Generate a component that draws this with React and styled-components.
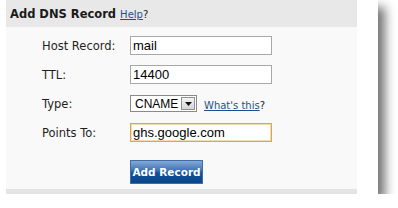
import { createGlobalStyle, styled } from 'styled-components';

const GlobalStyle = createGlobalStyle`
    html, body {
        margin: 0;
        padding: 0;
        background: #ffffff;
    }
    body {
        font-family: "DejaVu Sans", Verdana, sans-serif;
        color: #222;
    }
`;

const App = () => {
    return (
        <>
            <GlobalStyle />
            <Card>
                <Panel>
                    <PanelHeader>
                        <PanelTitle>Add DNS Record</PanelTitle>
                        <SmallLink href="#">Help</SmallLink>
                        <Mark>?</Mark>
                    </PanelHeader>
                    <PanelBody>
                        <Form>
                            <Label>Host Record:</Label>
                            <TextInput defaultValue="mail" />

                            <Label>TTL:</Label>
                            <TextInput defaultValue="14400" />

                            <Label>Type:</Label>
                            <Field>
                                <Select>
                                    <SelectValue>CNAME</SelectValue>
                                    <SelectButton>
                                        <svg width="7" height="4" viewBox="0 0 7 4">
                                            <path d="M0 0h7L3.5 4z" fill="#111" />
                                        </svg>
                                    </SelectButton>
                                </Select>
                                <span>
                                    <SmallLink href="#">What's this</SmallLink>
                                    <Mark>?</Mark>
                                </span>
                            </Field>

                            <Label>Points To:</Label>
                            <TextInput defaultValue="ghs.google.com" $focused spellCheck={false} />

                            <span />
                            <SubmitButton>Add Record</SubmitButton>
                        </Form>
                    </PanelBody>
                    <PanelFooter />
                </Panel>
            </Card>
        </>
    );
};

export default App;

const Card = styled.div`
    width: 378px;
    box-sizing: border-box;
    padding: 0 21px 0 6px;
    background: #fff;
    box-shadow: 7px 7px 10px rgba(0, 0, 0, 0.55);
`;

const Panel = styled.div`
    display: flex;
    flex-direction: column;
`;

const PanelHeader = styled.div`
    display: flex;
    align-items: baseline;
    height: 27px;
    box-sizing: border-box;
    padding: 7px 0 0 4px;
    background: #e8e8e8;
`;

const PanelTitle = styled.div`
    font-size: 11.5px;
    font-weight: 700;
    color: #1a1a1a;
    margin-right: 4px;
`;

const SmallLink = styled.a`
    font-size: 10px;
    color: #1d4f8f;
    text-decoration: underline;
`;

const Mark = styled.span`
    font-size: 10px;
    color: #222;
`;

const PanelBody = styled.div`
    height: 162px;
    box-sizing: border-box;
    padding: 9px 0 0 36px;
    background: #f9f9f9;
`;

const PanelFooter = styled.div`
    height: 5px;
    background: #e4e4e4;
`;

const Form = styled.div`
    display: grid;
    grid-template-columns: 88px auto;
    align-items: center;
    row-gap: 10px;
`;

const Label = styled.div`
    font-size: 11.5px;
    color: #1e1e1e;
`;

const TextInput = styled.input`
    width: 142px;
    height: 19px;
    box-sizing: border-box;
    padding: 0 2px;
    border: 1px solid ${(props) => (props.$focused ? '#dea646' : '#a8a8a8')};
    box-shadow: ${(props) => (props.$focused ? 'inset 0 0 0 1px #f3dcae' : 'none')};
    background: #fff;
    font-family: "Liberation Sans", Arial, sans-serif;
    font-size: 13px;
    color: #000;
    outline: none;
`;

const Field = styled.div`
    display: flex;
    align-items: center;
    gap: 7px;
`;

const Select = styled.div`
    display: flex;
    align-items: center;
    width: 67px;
    height: 17px;
    box-sizing: border-box;
    border: 1px solid #8a8a8a;
    background: #fff;
`;

const SelectValue = styled.span`
    flex: 1;
    padding-left: 4px;
    font-family: "Liberation Sans", Arial, sans-serif;
    font-size: 12px;
    color: #000;
`;

const SelectButton = styled.span`
    display: flex;
    align-items: center;
    justify-content: center;
    width: 14px;
    height: 13px;
    margin-right: 1px;
    box-sizing: border-box;
    border: 1px solid #909090;
    background: linear-gradient(#f4f4f4, #d6d6d6);
`;

const SubmitButton = styled.button`
    justify-self: start;
    width: 73px;
    height: 24px;
    margin-top: 8px;
    padding: 0;
    border: 1px solid #3c6eaa;
    background: linear-gradient(#86a9d6 0%, #4477b8 40%, #11509a 55%, #0b4689 100%);
    color: #fff;
    font-family: "DejaVu Sans", Verdana, sans-serif;
    font-size: 10.5px;
    font-weight: 700;
    cursor: pointer;
`;
